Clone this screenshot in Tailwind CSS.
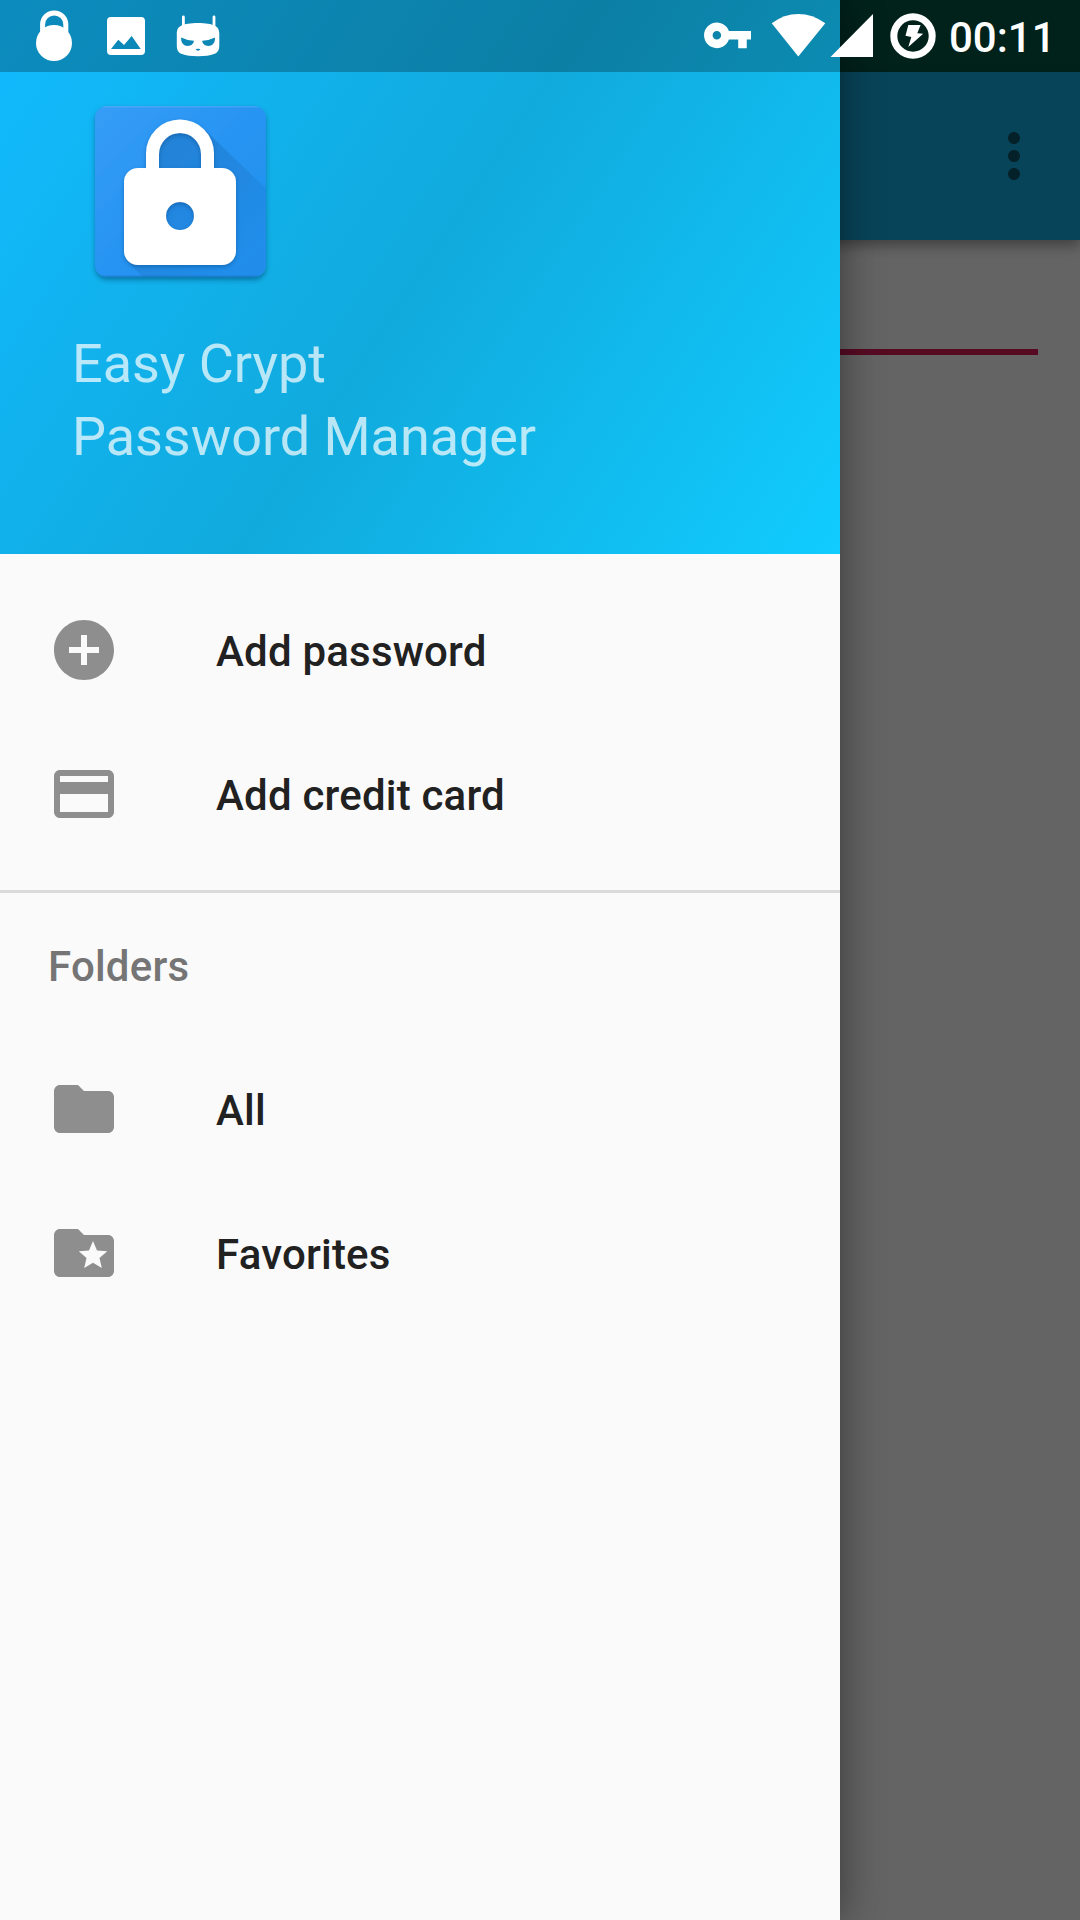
<!DOCTYPE html>
<html lang="en">
<head>
    <meta charset="UTF-8">
    <meta name="viewport" content="width=device-width, initial-scale=1.0">
    <title>Easy Crypt Password Manager</title>
    <script src="https://cdn.jsdelivr.net/npm/@tailwindcss/browser@4"></script>
</head>
<body class="relative w-[1080px] h-[1920px] overflow-hidden bg-[#fafafa] font-[Roboto,sans-serif]">
    <!-- App behind the drawer -->
    <div class="h-[72px] bg-[#005544]"></div>
    <header class="relative flex h-[168px] items-center justify-end bg-[#14aade] pr-[30px] shadow-[0_6px_12px_rgba(0,0,0,0.35)]">
        <svg class="size-[72px] fill-[#0c5468]" viewBox="0 0 24 24">
            <path d="M12 8c1.1 0 2-.9 2-2s-.9-2-2-2-2 .9-2 2 .9 2 2 2zm0 2c-1.1 0-2 .9-2 2s.9 2 2 2 2-.9 2-2-.9-2-2-2zm0 6c-1.1 0-2 .9-2 2s.9 2 2 2 2-.9 2-2-.9-2-2-2z"/>
        </svg>
    </header>
    <main class="px-[42px] pt-[109px]">
        <div class="h-[6px] bg-[#d91d58]"></div>
    </main>

    <!-- Scrim -->
    <div class="absolute inset-0 bg-black/60"></div>

    <!-- Drawer -->
    <aside class="absolute inset-y-0 left-0 w-[840px] bg-[#fafafa] shadow-[0_0_40px_rgba(0,0,0,0.45)]">
        <div class="h-[554px] bg-[linear-gradient(123.4deg,#11bbff,#11aadd_50%,#11ccff)] pt-[96px] pl-[72px]">
            <svg class="ml-3 size-[192px]" viewBox="0 0 192 192">
                <defs>
                    <linearGradient id="plate" x1="0" y1="0" x2="1" y2="1">
                        <stop offset="0" stop-color="#369df7"/>
                        <stop offset="0.5" stop-color="#2794f2"/>
                        <stop offset="1" stop-color="#2090ee"/>
                    </linearGradient>
                    <linearGradient id="cast" gradientUnits="userSpaceOnUse" x1="70" y1="50" x2="170" y2="150">
                        <stop offset="0" stop-color="#0d4f8f" stop-opacity="0.3"/>
                        <stop offset="1" stop-color="#0d4f8f" stop-opacity="0.05"/>
                    </linearGradient>
                    <filter id="drop" x="-10%" y="-10%" width="120%" height="125%">
                        <feDropShadow dx="0" dy="3" stdDeviation="2.5" flood-color="#053a66" flood-opacity="0.5"/>
                    </filter>
                    <filter id="soft" x="-10%" y="-10%" width="120%" height="120%">
                        <feDropShadow dx="0" dy="2" stdDeviation="2" flood-color="#0a3f78" flood-opacity="0.4"/>
                    </filter>
                    <clipPath id="clip"><rect x="11" y="10" width="171" height="171" rx="12"/></clipPath>
                </defs>
                <rect x="11" y="10" width="171" height="171" rx="12" fill="url(#plate)" filter="url(#drop)"/>
                <g clip-path="url(#clip)">
                    <path d="M75 40L121 34L196 106V196H74L42 164V90H75Z" fill="url(#cast)"/>
                    <rect x="11" y="10" width="171" height="1.5" fill="#fff" opacity="0.12"/>
                    <rect x="11" y="179.5" width="171" height="1.5" fill="#0d4f8f" opacity="0.25"/>
                </g>
                <path filter="url(#soft)" fill="#fff" fill-rule="evenodd" d="M62 72V57.5a34 34 0 0 1 68 0V72h8a14 14 0 0 1 14 14v69a14 14 0 0 1-14 14H54a14 14 0 0 1-14-14V86a14 14 0 0 1 14-14ZM75 72h42V58a21 21 0 0 0-42 0ZM96 106a14 14 0 1 0 0 28 14 14 0 0 0 0-28Z"/>
            </svg>
            <p class="mt-[39px] text-[54px] leading-[73px] tracking-[-0.05px] text-white/70">Easy Crypt<br>Password Manager</p>
        </div>

        <nav class="pt-6 text-[42px] font-medium tracking-[0.2px] text-[#212121]">
            <a class="flex h-36 items-center gap-24 pl-12">
                <svg class="size-[72px] fill-[#8e8e8e]" viewBox="0 0 24 24"><path d="M12 2C6.48 2 2 6.48 2 12s4.48 10 10 10 10-4.48 10-10S17.52 2 12 2zm5 11h-4v4h-2v-4H7v-2h4V7h2v4h4v2z"/></svg>
                <span class="pt-[2px]">Add password</span>
            </a>
            <a class="flex h-36 items-center gap-24 pl-12">
                <svg class="size-[72px] fill-[#8e8e8e]" viewBox="0 0 24 24"><path d="M20 4H4c-1.11 0-1.99.89-1.99 2L2 18c0 1.11.89 2 2 2h16c1.11 0 2-.89 2-2V6c0-1.11-.89-2-2-2zm0 14H4v-6h16v6zm0-10H4V6h16v2z"/></svg>
                <span class="pt-[2px]">Add credit card</span>
            </a>
            <div class="mt-6 h-[3px] bg-[#dadada]"></div>
            <h2 class="flex h-36 items-center pt-[2px] pl-12 text-[#757575]">Folders</h2>
            <a class="flex h-36 items-center gap-24 pl-12">
                <svg class="size-[72px] fill-[#8e8e8e]" viewBox="0 0 24 24"><path d="M10 4H4c-1.1 0-1.99.9-1.99 2L2 18c0 1.1.9 2 2 2h16c1.1 0 2-.9 2-2V8c0-1.1-.9-2-2-2h-8l-2-2z"/></svg>
                <span class="pt-[2px]">All</span>
            </a>
            <a class="flex h-36 items-center gap-24 pl-12">
                <svg class="size-[72px] fill-[#8e8e8e]" viewBox="0 0 24 24"><path d="M20 6h-8l-2-2H4c-1.1 0-1.99.9-1.99 2L2 18c0 1.1.9 2 2 2h16c1.1 0 2-.9 2-2V8c0-1.1-.9-2-2-2zm-2.06 11L15 15.28 12.06 17l.78-3.33-2.59-2.24 3.41-.29L15 8l1.34 3.14 3.41.29-2.59 2.24.78 3.33z"/></svg>
                <span class="pt-[2px]">Favorites</span>
            </a>
        </nav>
    </aside>

    <!-- Status bar -->
    <div class="absolute inset-x-0 top-0 flex h-[72px] justify-between">
        <div class="flex w-[840px] justify-between bg-black/25 fill-white">
            <div class="flex gap-9 pl-9">
                <svg class="h-[72px] w-9" viewBox="36 0 36 72">
                    <path d="M42.6 32V24.5a11.6 11.6 0 0 1 23.2 0V32" fill="none" stroke="#fff" stroke-width="5"/>
                    <circle cx="54" cy="43" r="18"/>
                </svg>
                <svg class="h-[72px] w-9 overflow-visible" viewBox="108 0 36 72">
                    <path fill-rule="evenodd" d="M111 17h30a4 4 0 0 1 4 4v30a4 4 0 0 1-4 4h-30a4 4 0 0 1-4-4V21a4 4 0 0 1 4-4ZM111 49h29.7l-9-13-7.7 9-5.7-5.3Z"/>
                </svg>
                <svg class="h-[72px] w-9 overflow-visible" viewBox="180 0 36 72">
                    <path d="M183.4 17v10M214 17v10" stroke="#fff" stroke-width="2.8" stroke-linecap="round"/>
                    <path fill-rule="evenodd" d="M198 23C206 23 211 24 214.5 25.5C218 27 219.3 30 219.3 34V45C219.3 50 218 52.5 214 54C210 55.5 205 56.2 198 56.2S186 55.5 182 54C178 52.5 176.8 50 176.8 45V34C176.8 30 178 27 181.5 25.5C185 24 190 23 198 23ZM181.2 37.5C180.5 42.5 184 46 187.8 46C191 46 193.6 44 193.9 40.8Q186.5 40.3 181.2 37.5ZM214.9 37.5Q209.6 40.3 202.2 40.8C202.5 44 205.1 46 208.3 46C212.1 46 215.6 42.5 214.9 37.5ZM195.6 49C196.2 50.1 197 50.7 198 50.7S199.8 50.1 200.4 49Q198 48.5 195.6 49Z"/>
                </svg>
            </div>
            <div class="flex">
                <svg class="h-[72px] w-[68px]" viewBox="702 0 68 72">
                    <path transform="translate(701.9 9.7) scale(2.136)" d="M12.65 10C11.83 7.67 9.61 6 7 6c-3.31 0-6 2.69-6 6s2.69 6 6 6c2.61 0 4.83-1.67 5.65-4H17v4h4v-4h2v-4H12.65zM7 14c-1.1 0-2-.9-2-2s.9-2 2-2 2 .9 2 2-.9 2-2 2z"/>
                </svg>
                <svg class="h-[72px] w-[58px]" viewBox="770 0 58 72"><path d="M771.7 23.3Q784 14 798.3 14T825.3 23.3L798.3 56.5Z"/></svg>
                <svg class="z-10 h-[72px] w-3 overflow-visible" viewBox="828 0 12 72"><path d="M830.5 57H873V14Z"/></svg>
            </div>
        </div>
        <div class="flex flex-1 items-center pl-[50px]">
            <svg class="h-[72px] w-[46px]" viewBox="890 0 46 72">
                <circle cx="913" cy="36" r="19.2" fill="none" stroke="#fff" stroke-width="7"/>
                <path fill="#fff" d="M908.3 25H920.6L917.3 33.2L923.2 33.8L908.3 47L911.3 37L905.5 35.7Z"/>
            </svg>
            <span class="pt-[2px] pl-[13px] text-[42px] font-medium text-white">00:11</span>
        </div>
    </div>
</body>
</html>
